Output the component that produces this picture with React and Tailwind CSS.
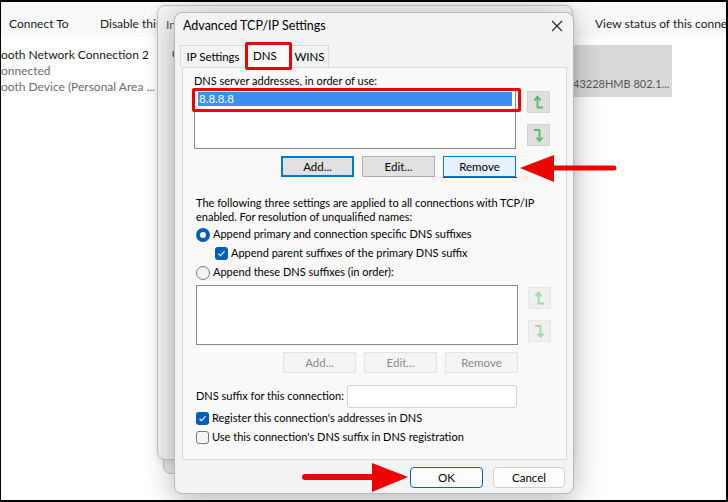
const UpArrow = ({ faded }) => (
  <svg width="12" height="15" viewBox="0 0 12 15">
    <path
      d="M1.5 5.5 L4.5 1.5 L7.5 5.5 M4.5 1.5 V12.5 H10"
      fill="none"
      stroke={faded ? "#9edaa6" : "#52bf62"}
      strokeWidth="1.8"
      strokeLinejoin="round"
    />
  </svg>
);

const DownArrow = ({ faded }) => (
  <svg width="12" height="15" viewBox="0 0 12 15">
    <path
      d="M1 2 H6.5 V13 M3.5 9.5 L6.5 13 L9.5 9.5"
      fill="none"
      stroke={faded ? "#9edaa6" : "#52bf62"}
      strokeWidth="1.8"
      strokeLinejoin="round"
    />
  </svg>
);

const ArrowBtn = ({ children, faded }) => (
  <div
    className={`w-[23px] h-[22px] flex items-center justify-center border ${
      faded ? "bg-[#efefef] border-[#e6e6e6]" : "bg-[#dedede] border-[#d2d2d2]"
    }`}
  >
    {children}
  </div>
);

const Btn = ({ children, variant }) => {
  const styles = {
    normal: "bg-[#e1e1e1] border-[#adadad] text-black",
    focus: "bg-[#e1e1e1] border-[#0078d7] border-2 text-black",
    hover: "bg-[#e5f1fb] border-[#0078d7] text-black",
    disabled: "bg-[#f4f4f4] border-[#e3e3e3] text-[#8a8a8a]",
  };
  return (
    <div
      className={`w-[73px] h-[21px] flex items-center justify-center border text-[11.5px] ${styles[variant]}`}
    >
      {children}
    </div>
  );
};

const Check = () => (
  <div className="w-[13px] h-[13px] rounded-[3px] bg-[#005fb8] flex items-center justify-center shrink-0">
    <svg width="9" height="9" viewBox="0 0 9 9">
      <path d="M1.5 4.8 L3.5 6.6 L7.5 2.4" fill="none" stroke="#fff" strokeWidth="1.2" />
    </svg>
  </div>
);

const Uncheck = () => (
  <div className="w-[13px] h-[13px] rounded-[3px] border border-[#7a7a7a] bg-[#f5f5f5] shrink-0" />
);

const Dialog = () => (
  <div className="absolute left-[173px] top-[10px] w-[400px] h-[482px] rounded-lg bg-[#f3f3f3] border border-[#b8b8b8] shadow-[0_6px_30px_rgba(0,0,0,0.3)] flex flex-col text-black">
    {/* Title */}
    <div className="h-[26px] flex items-center justify-between pl-[8px] pr-[10px]">
      <span className="text-[12.5px]">Advanced TCP/IP Settings</span>
      <svg width="12" height="12" viewBox="0 0 12 12">
        <path d="M1 1 L11 11 M11 1 L1 11" stroke="#222" strokeWidth="1.1" />
      </svg>
    </div>

    {/* Tabs */}
    <div className="flex items-end pl-[5px] h-[27px] mt-[1px]">
      <div className="h-[22px] w-[66px] flex items-center justify-center border border-b-0 border-[#d9d9d9] bg-[#f3f3f3] text-[11.5px]">
        IP Settings
      </div>
      <div className="relative h-[25px] w-[45px] flex items-start pt-[3px] pl-[6px] bg-[#f9f9f9] border border-b-0 border-[#d9d9d9] text-[11.5px] z-10 mb-[-1px]">
        DNS
        <div className="absolute left-[-2px] top-[-2px] w-[47px] h-[28px] border-[3px] border-[#ee0000] rounded-[2px]" />
      </div>
      <div className="h-[22px] w-[38px] flex items-center justify-center border border-b-0 border-l-0 border-[#d9d9d9] bg-[#f3f3f3] text-[11.5px]">
        WINS
      </div>
    </div>

    {/* Panel */}
    <div className="ml-[7px] w-[385px] h-[393px] bg-[#f9f9f9] border border-[#d9d9d9] pl-[11px] pt-[5px] text-[11px] flex flex-col">
      <div className="leading-[15px]">DNS server addresses, in order of use:</div>
      <div className="flex">
        <div className="relative w-[322px] h-[61px] bg-white border border-[#828790] p-[3px]">
          <div className="h-[14px] bg-[#3a8ff0] text-white leading-[14px] pl-[1px] text-[11.5px]">8.8.8.8</div>
          <div className="absolute left-[-3px] top-[-1px] w-[329px] h-[24px] border-[3px] border-[#ee0000] rounded-[2px]" />
        </div>
        <div className="ml-[11px] pt-[3px] flex flex-col gap-[11px]">
          <ArrowBtn>
            <UpArrow />
          </ArrowBtn>
          <ArrowBtn>
            <DownArrow />
          </ArrowBtn>
        </div>
      </div>
      <div className="w-[322px] flex justify-end gap-[8px] mt-[7px]">
        <Btn variant="focus">Add...</Btn>
        <Btn variant="normal">Edit...</Btn>
        <div className="relative">
          <Btn variant="hover">Remove</Btn>
          <div className="absolute left-0 bottom-[-1px] w-[74px] h-[1px] bg-[#ee0000]" />
        </div>
      </div>

      <div className="mt-[19px] ml-[2px] leading-[14px] whitespace-nowrap">
        The following three settings are applied to all connections with TCP/IP
        <br />
        enabled. For resolution of unqualified names:
      </div>
      <div className="mt-[1px] ml-[2px] h-[19px] flex items-center gap-[3px]">
        <div className="w-[14px] h-[14px] rounded-full border-[4px] border-[#005fb8] bg-white shrink-0" />
        <span>Append primary and connection specific DNS suffixes</span>
      </div>
      <div className="ml-[21px] h-[19px] flex items-center gap-[3px]">
        <Check />
        <span>Append parent suffixes of the primary DNS suffix</span>
      </div>
      <div className="ml-[2px] h-[19px] flex items-center gap-[3px]">
        <div className="w-[14px] h-[14px] rounded-full border border-[#7a7a7a] bg-[#f3f3f3] shrink-0" />
        <span>Append these DNS suffixes (in order):</span>
      </div>
      <div className="flex mt-[3px] ml-[2px]">
        <div className="w-[322px] h-[60px] bg-white border border-[#828790]" />
        <div className="ml-[10px] pt-[2px] flex flex-col gap-[11px]">
          <ArrowBtn faded>
            <UpArrow faded />
          </ArrowBtn>
          <ArrowBtn faded>
            <DownArrow faded />
          </ArrowBtn>
        </div>
      </div>
      <div className="w-[324px] flex justify-end gap-[8px] mt-[7px]">
        <Btn variant="disabled">Add...</Btn>
        <Btn variant="disabled">Edit...</Btn>
        <Btn variant="disabled">Remove</Btn>
      </div>

      <div className="mt-[12px] ml-[2px] flex items-center whitespace-nowrap">
        <span className="w-[151px]">DNS suffix for this connection:</span>
        <div className="w-[170px] h-[23px] bg-white border border-[#d4d4d4] rounded-[2px]" />
      </div>
      <div className="mt-[1px] ml-[2px] h-[19px] flex items-center gap-[3px]">
        <Check />
        <span>Register this connection's addresses in DNS</span>
      </div>
      <div className="ml-[2px] h-[19px] flex items-center gap-[3px]">
        <Uncheck />
        <span>Use this connection's DNS suffix in DNS registration</span>
      </div>
    </div>

    {/* Footer */}
    <div className="flex justify-end gap-[10px] pr-[8px] mt-[7px] text-[11.5px]">
      <div className="w-[73px] h-[21px] rounded-[4px] bg-[#fdfdfd] border border-[#0067c0] flex items-center justify-center">
        OK
      </div>
      <div className="w-[72px] h-[21px] rounded-[4px] bg-[#fdfdfd] border border-[#d0d0d0] flex items-center justify-center">
        Cancel
      </div>
    </div>
  </div>
);

export default function App() {
  return (
    <div className="relative w-[728px] h-[502px] overflow-hidden bg-white border-black border-t-2 border-l border-r-2 border-b-2 font-['Lato',sans-serif]">
      {/* Explorer toolbar */}
      <div className="h-[35px] pt-[8px] bg-[#f9f9f9] flex items-center text-[12px] text-[#1a1a1a] whitespace-nowrap">
        <span className="w-[99px] pl-[8px] shrink-0">Connect To</span>
        <span className="w-[57px] overflow-hidden shrink-0">Disable this</span>
        <span className="ml-[438px] shrink-0">View status of this connection</span>
      </div>

      {/* Connection list */}
      <div className="flex items-start whitespace-nowrap">
        <div className="w-[155px] pt-[10px] text-[12px] leading-[16px] shrink-0">
          <div className="text-[#1a1a1a]">ooth Network Connection 2</div>
          <div className="text-[#6d6d6d]">onnected</div>
          <div className="text-[#6d6d6d]">ooth Device (Personal Area ...</div>
        </div>
        <div className="ml-[417px] mt-[8px] w-[99px] h-[52px] shrink-0 bg-[#d9d9d9] flex items-end pb-[5px] text-[11px] text-[#555] overflow-hidden">
          43228HMB 802.1...
        </div>
      </div>

      {/* Windows behind */}
      <div className="absolute left-[162px] top-[12px] w-[410px] h-[460px] rounded-lg bg-[#ededed] border border-[#c4c4c4]" />
      <div className="absolute left-[156px] top-[3px] w-[416px] h-[455px] rounded-lg bg-[#f3f3f3] border border-[#c4c4c4] shadow-[0_2px_8px_rgba(0,0,0,0.12)]">
        <div className="ml-[8px] mt-[10px] w-[8px] overflow-hidden whitespace-nowrap text-[12px] text-[#555]">Internet</div>
        <div className="ml-[14px] mt-[12px] w-[4px] overflow-hidden text-[11px] text-[#333]">C</div>
      </div>

      <Dialog />

      {/* Red arrows */}
      <svg className="absolute left-[518px] top-[152px]" width="100" height="32" viewBox="0 0 100 32">
        <path d="M1 14 L35 1 L35 28 Z" fill="#ee0000" />
        <path d="M30 14 H95" stroke="#ee0000" strokeWidth="5" strokeLinecap="round" />
      </svg>
      <svg className="absolute left-[298px] top-[459px]" width="110" height="32" viewBox="0 0 110 32">
        <path d="M109 16 L73 2 L73 31 Z" fill="#ee0000" />
        <path d="M6 16 H80" stroke="#ee0000" strokeWidth="6" strokeLinecap="round" />
      </svg>
    </div>
  );
}
